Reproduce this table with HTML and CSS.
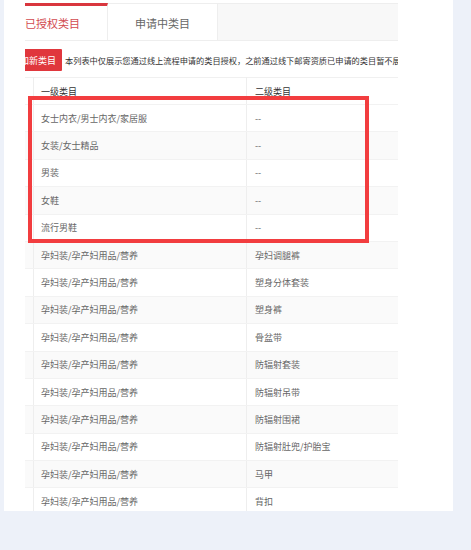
FILE: index.html
```html
<!DOCTYPE html>
<html lang="zh-CN">
<head>
  <meta charset="UTF-8">
  <title>类目管理</title>
  <link rel="stylesheet" href="styles.css">
</head>
<body>

  <div class="panel">
    <div class="viewport">
      <div class="content">

        <div class="tabs">
          <div class="tab active">已授权类目</div>
          <div class="tab">申请中类目</div>
        </div>

        <div class="toolbar">
          <button class="btn-add">添加新类目</button>
          <span class="notice">本列表中仅展示您通过线上流程申请的类目授权，之前通过线下邮寄资质已申请的类目暂不展示，如需查看请联系客服。</span>
        </div>

        <table class="cat-table">
          <thead>
            <tr><th class="c0"></th><th class="c1">一级类目</th><th class="c2">二级类目</th></tr>
          </thead>
          <tbody>
            <tr><td class="c0"></td><td>女士内衣/男士内衣/家居服</td><td>--</td></tr>
            <tr><td class="c0"></td><td>女装/女士精品</td><td>--</td></tr>
            <tr><td class="c0"></td><td>男装</td><td>--</td></tr>
            <tr><td class="c0"></td><td>女鞋</td><td>--</td></tr>
            <tr><td class="c0"></td><td>流行男鞋</td><td>--</td></tr>
            <tr><td class="c0"></td><td>孕妇装/孕产妇用品/营养</td><td>孕妇调腿裤</td></tr>
            <tr><td class="c0"></td><td>孕妇装/孕产妇用品/营养</td><td>塑身分体套装</td></tr>
            <tr><td class="c0"></td><td>孕妇装/孕产妇用品/营养</td><td>塑身裤</td></tr>
            <tr><td class="c0"></td><td>孕妇装/孕产妇用品/营养</td><td>骨盆带</td></tr>
            <tr><td class="c0"></td><td>孕妇装/孕产妇用品/营养</td><td>防辐射套装</td></tr>
            <tr><td class="c0"></td><td>孕妇装/孕产妇用品/营养</td><td>防辐射吊带</td></tr>
            <tr><td class="c0"></td><td>孕妇装/孕产妇用品/营养</td><td>防辐射围裙</td></tr>
            <tr><td class="c0"></td><td>孕妇装/孕产妇用品/营养</td><td>防辐射肚兜/护胎宝</td></tr>
            <tr><td class="c0"></td><td>孕妇装/孕产妇用品/营养</td><td>马甲</td></tr>
            <tr><td class="c0"></td><td>孕妇装/孕产妇用品/营养</td><td>背扣</td></tr>
          </tbody>
        </table>

      </div>
    </div>

    <!-- highlight frame drawn over the first rows -->
    <div class="highlight"></div>
  </div>

</body>
</html>
```

FILE: styles.css
```css
body {
  margin: 0;
  background: #edf1f9;
  font-family: "Noto Sans CJK SC", "Noto Sans", sans-serif;
  height: 550px;
  overflow: hidden;
}

.panel {
  position: relative;
  margin-left: 4px;
  width: 449px;
  height: 511px;
  background: #fff;
  overflow: hidden;
}

.viewport {
  margin-left: 21px;
  width: 373px;
  overflow: hidden;
}

.content {
  margin-left: -27px;
  width: 460px;
}

/* tabs */
.tabs {
  display: flex;
  margin-top: 3px;
  height: 38px;
  box-sizing: border-box;
  background: #f8f8f8;
  border-top: 1px solid #eee;
  border-bottom: 1px solid #eee;
}

.tab {
  width: 110px;
  box-sizing: border-box;
  display: flex;
  align-items: center;
  justify-content: center;
  padding-top: 2px;
  background: #fff;
  border-right: 1px solid #eee;
  font-size: 11px;
  color: #666;
}

.tab.active {
  margin-top: -1px;
  border-top: 3px solid #d9363e;
  color: #d24a50;
  padding-top: 0;
}

/* toolbar */
.toolbar {
  display: flex;
  align-items: center;
  margin-top: 8px;
  height: 22px;
  margin-bottom: 6px;
  white-space: nowrap;
}

.btn-add {
  flex-shrink: 0;
  margin-left: 7px;
  height: 22px;
  padding: 0 6px;
  border: none;
  border-radius: 1px;
  background: #e0373d;
  color: #fff;
  font-family: inherit;
  font-size: 9px;
}

.notice {
  flex-shrink: 0;
  margin-left: 3px;
  font-size: 8.2px;
  color: #333;
}

/* table */
.cat-table {
  width: 460px;
  border-collapse: collapse;
  table-layout: fixed;
  font-size: 9px;
  color: #666;
  border-top: 1px solid #f0f0f0;
}

.cat-table th,
.cat-table td {
  text-align: left;
  font-weight: normal;
  padding: 0 0 0 7px;
  border-bottom: 1px solid #f2f2f2;
  white-space: nowrap;
}

.cat-table th {
  height: 26px;
  color: #333;
}

.cat-table td {
  height: 27.4px;
  box-sizing: border-box;
}

.cat-table .c0 { width: 35px; padding: 0; border-right: 1px solid #eee; }
.cat-table .c1 { width: 205px; }
.cat-table td:nth-child(2),
.cat-table th:nth-child(2) { border-right: 1px solid #eee; }
.cat-table td:nth-child(3),
.cat-table th:nth-child(3) { padding-left: 8px; }

.cat-table tbody tr:nth-child(even) { background: #fafafa; }

/* overlay frame */
.highlight {
  position: absolute;
  left: 24px;
  top: 96px;
  width: 341px;
  height: 147px;
  box-sizing: border-box;
  border: 4px solid #f23d3f;
}
```
